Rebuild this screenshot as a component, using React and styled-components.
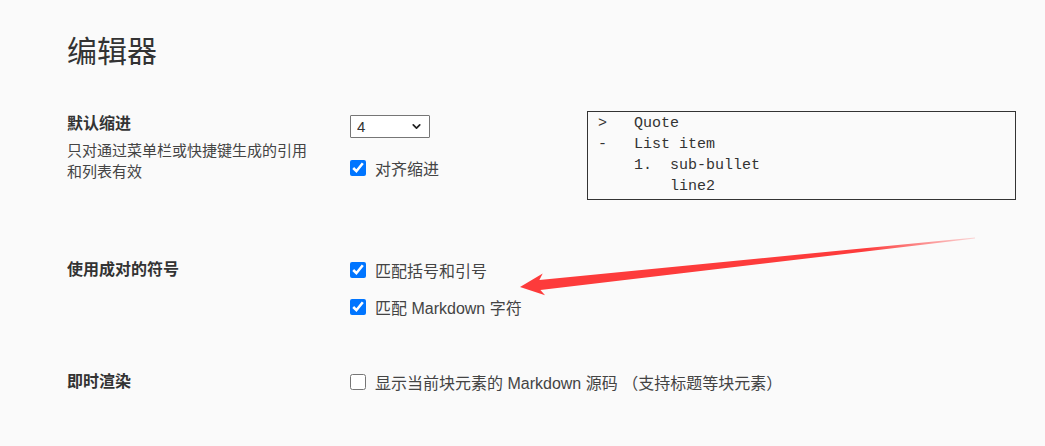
import React from "react";
import styled, { createGlobalStyle } from "styled-components";
import { ChevronDown } from "lucide-react";

const GlobalStyle = createGlobalStyle`
  html, body {
    margin: 0;
    padding: 0;
    background: #fafafa;
  }
  body {
    font-family: "Liberation Sans", "Noto Sans CJK SC", sans-serif;
    color: #333;
  }
`;

const Page = styled.div`
  position: relative;
  width: 1045px;
  height: 446px;
  overflow: hidden;
  box-sizing: border-box;
  padding: 32px 0 0 67px;
  background: #fafafa;
`;

const Title = styled.h1`
  margin: 0;
  font-size: 30px;
  line-height: 40px;
  font-weight: 400;
  color: #333;
`;

const Section = styled.div`
  display: grid;
  grid-template-columns: 283px 237px 429px;
  align-items: start;
  margin-top: ${(p) => p.$top}px;
`;

const LabelCol = styled.div`
  padding-top: ${(p) => p.$offset || 0}px;
`;

const Label = styled.div`
  font-size: 16px;
  line-height: 22px;
  font-weight: 700;
  color: #333;
`;

const Desc = styled.div`
  margin-top: 5px;
  max-width: 250px;
  font-size: 15px;
  line-height: 21px;
  color: #444;
`;

const Controls = styled.div`
  display: flex;
  flex-direction: column;
  align-items: flex-start;
  gap: ${(p) => p.$gap || 15}px;
  padding-top: ${(p) => p.$offset || 0}px;
`;

const SelectWrap = styled.div`
  position: relative;
  width: 80px;
  height: 23px;
`;

const Select = styled.select`
  appearance: none;
  -webkit-appearance: none;
  box-sizing: border-box;
  width: 80px;
  height: 23px;
  margin: 0;
  padding: 0 0 0 6px;
  border: 1px solid #767676;
  border-radius: 1px;
  background: #fff;
  font-family: "Liberation Sans", sans-serif;
  font-size: 15px;
  color: #333;
  outline: none;
`;

const Chevron = styled(ChevronDown)`
  position: absolute;
  right: 7px;
  top: 5px;
  pointer-events: none;
  color: #222;
`;

const CheckRow = styled.label`
  display: flex;
  align-items: center;
  gap: 9px;
  height: 22px;
  font-size: 16px;
  color: #444;
  white-space: nowrap;
`;

const Check = styled.input.attrs({ type: "checkbox" })`
  flex: 0 0 16px;
  width: 16px;
  height: 16px;
  margin: 0;
  accent-color: #0075ff;
`;

const CodePreview = styled.pre`
  box-sizing: border-box;
  width: 429px;
  height: 89px;
  margin: 0;
  padding: 1px 10px 3px;
  border: 1px solid #333;
  font-family: "Liberation Mono", monospace;
  font-size: 15px;
  line-height: 21px;
  color: #333;
  white-space: pre;
`;

const Arrow = styled.svg`
  position: absolute;
  left: 0;
  top: 0;
  pointer-events: none;
`;

const codeSample = [
  ">   Quote",
  "-   List item",
  "    1.  sub-bullet",
  "        line2",
].join("\n");

const CheckOption = ({ checked, children }) => (
  <CheckRow>
    <Check defaultChecked={checked} />
    <span>{children}</span>
  </CheckRow>
);

export default function App() {
  return (
    <>
      <GlobalStyle />
      <Page>
        <Title>编辑器</Title>

        <Section $top={39}>
          <LabelCol $offset={2}>
            <Label>默认缩进</Label>
            <Desc>只对通过菜单栏或快捷键生成的引用和列表有效</Desc>
          </LabelCol>
          <Controls $offset={4} $gap={19}>
            <SelectWrap>
              <Select defaultValue="4">
                <option value="2">2</option>
                <option value="4">4</option>
                <option value="8">8</option>
              </Select>
              <Chevron size={13} strokeWidth={3.2} />
            </SelectWrap>
            <CheckOption checked>对齐缩进</CheckOption>
          </Controls>
          <CodePreview>{codeSample}</CodePreview>
        </Section>

        <Section $top={59}>
          <LabelCol>
            <Label>使用成对的符号</Label>
          </LabelCol>
          <Controls>
            <CheckOption checked>匹配括号和引号</CheckOption>
            <CheckOption checked>匹配 Markdown 字符</CheckOption>
          </Controls>
        </Section>

        <Section $top={53}>
          <LabelCol>
            <Label>即时渲染</Label>
          </LabelCol>
          <Controls>
            <CheckOption>显示当前块元素的 Markdown 源码 （支持标题等块元素）</CheckOption>
          </Controls>
        </Section>

        <Arrow width="1045" height="446" viewBox="0 0 1045 446">
          <defs>
            <linearGradient id="arrowFade" x1="520" y1="0" x2="980" y2="0" gradientUnits="userSpaceOnUse">
              <stop offset="0" stopColor="#fd3b3b" />
              <stop offset="0.75" stopColor="#fd3b3b" />
              <stop offset="1" stopColor="#fd3b3b" stopOpacity="0.15" />
            </linearGradient>
          </defs>
          <polygon
            fill="url(#arrowFade)"
            points="520,287 542.7,273.5 539.4,279.9 975,237.4 975,238.6 540.4,289.9 545.1,295.3"
          />
        </Arrow>
      </Page>
    </>
  );
}
